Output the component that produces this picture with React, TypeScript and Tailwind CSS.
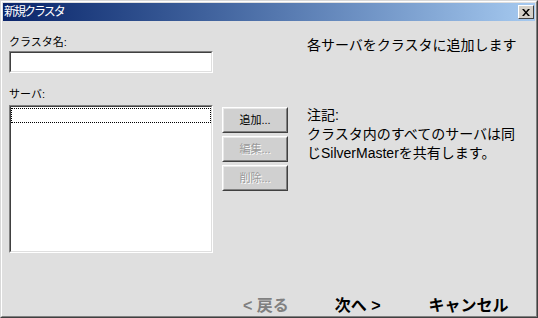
import React from 'react';

const jp = { fontFamily: '"Liberation Sans", "Noto Sans CJK JP", sans-serif' };

const Btn: React.FC<{ label: string; disabled?: boolean }> = ({ label, disabled }) => (
  <div className="w-[66px] h-[26px] border border-t-white border-l-white border-b-[#404040] border-r-[#404040] bg-[#d0d0d0]">
    <div className="w-full h-full border border-t-[#e8e8e8] border-l-[#e8e8e8] border-b-[#808080] border-r-[#808080] flex items-center justify-center">
      <span
        className={
          disabled
            ? 'text-[11px] leading-none text-[#9a9a9a] [text-shadow:1px_1px_0_#ffffff]'
            : 'text-[11px] leading-none text-black'
        }
      >
        {label}
      </span>
    </div>
  </div>
);

export default function App() {
  return (
    <div style={jp} className="w-[538px] h-[318px] bg-[#dfdfdf] border border-t-[#d8d8d8] border-l-[#d8d8d8] border-b-[#404040] border-r-[#404040]">
      <div className="w-full h-full border border-t-white border-l-white border-b-[#808080] border-r-[#808080] p-px flex flex-col">
        {/* title bar */}
        <div className="h-[18px] bg-gradient-to-r from-[#0a246a] to-[#a6caf0] flex items-center justify-between pl-[1px] pr-[1px]">
          <span className="text-white text-[12px] tracking-[-2px] leading-none">新規クラスタ</span>
          <div className="w-[16px] h-[14px] bg-[#d4d0c8] border border-t-white border-l-white border-b-[#404040] border-r-[#404040] flex items-center justify-center">
            <svg width="8" height="7" viewBox="0 0 8 7">
              <path d="M0 0h2l2 2.5L6 0h2L5 3.5 8 7H6L4 4.5 2 7H0l3-3.5z" fill="#000" />
            </svg>
          </div>
        </div>

        {/* body */}
        <div className="flex-1 flex flex-col">
          <div className="flex flex-1">
            {/* left column */}
            <div className="ml-[6px] w-[204px] pt-[14px] flex flex-col">
              <span className="h-[14px] text-[11px] leading-[14px] text-black">クラスタ名:</span>
              <div className="mt-[2px] h-[22px] bg-white border border-t-[#808080] border-l-[#808080] border-b-white border-r-white">
                <div className="w-full h-full border border-t-[#404040] border-l-[#404040] border-b-[#dfdfdf] border-r-[#dfdfdf]" />
              </div>
              <span className="mt-[14px] h-[14px] text-[11px] leading-[14px] text-black">サーバ:</span>
              <div className="mt-[4px] h-[148px] bg-white border border-t-[#808080] border-l-[#808080] border-b-white border-r-white">
                <div className="w-full h-full border border-t-[#404040] border-l-[#404040] border-b-[#dfdfdf] border-r-[#dfdfdf] pt-px">
                  <div className="h-[15px] border border-dotted border-black" />
                </div>
              </div>
            </div>

            {/* buttons */}
            <div className="ml-[9px] mt-[86px] flex flex-col gap-[3px]">
              <Btn label="追加..." />
              <Btn label="編集..." disabled />
              <Btn label="削除..." disabled />
            </div>

            {/* description */}
            <div className="ml-[19px] flex flex-col text-[14px] leading-[19px] text-black whitespace-nowrap">
              <p className="mt-[15px]">各サーバをクラスタに追加します</p>
              <div className="mt-[51px]">
                <p>注記:</p>
                <p>クラスタ内のすべてのサーバは同</p>
                <p>じSilverMasterを共有します。</p>
              </div>
            </div>
          </div>

          {/* footer */}
          <div className="h-[20px] mb-[1px] flex items-end text-[16px] font-bold leading-none whitespace-nowrap">
            <span className="ml-[240px] text-[#808080]">&lt; 戻る</span>
            <span className="ml-[46px] text-black">次へ &gt;</span>
            <span className="ml-[48px] text-black">キャンセル</span>
          </div>
        </div>
      </div>
    </div>
  );
}
